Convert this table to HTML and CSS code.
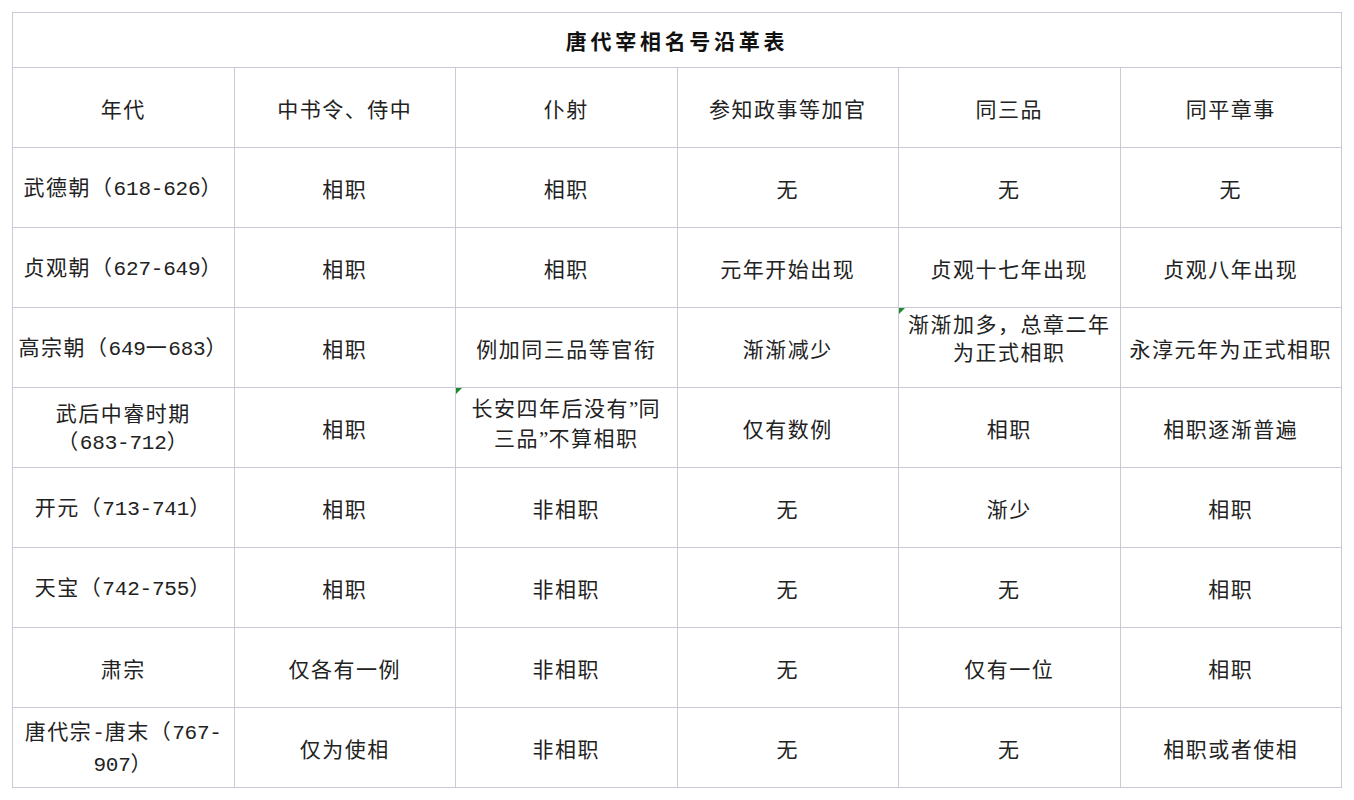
FILE: index.html
```html
<!DOCTYPE html>
<html lang="zh-CN">
<head>
<meta charset="utf-8">
<title>唐代宰相名号沿革表</title>
<link rel="stylesheet" href="styles.css">
</head>
<body>
<table class="tbl">
  <colgroup>
    <col class="c"><col class="c"><col class="c"><col class="c"><col class="c"><col class="c">
  </colgroup>
  <tr><td colspan="6"><div class="cell title"><p>唐代宰相名号沿革表</p></div></td></tr>
  <tr>
    <td><div class="cell"><p>年代</p></div></td><td><div class="cell"><p>中书令、侍中</p></div></td><td><div class="cell"><p>仆射</p></div></td><td><div class="cell"><p>参知政事等加官</p></div></td><td><div class="cell"><p>同三品</p></div></td><td><div class="cell"><p>同平章事</p></div></td>
  </tr>
  <tr>
    <td><div class="cell"><p>武德朝（<span class="n">618-626</span>）</p></div></td><td><div class="cell"><p>相职</p></div></td><td><div class="cell"><p>相职</p></div></td><td><div class="cell"><p>无</p></div></td><td><div class="cell"><p>无</p></div></td><td><div class="cell"><p>无</p></div></td>
  </tr>
  <tr>
    <td><div class="cell"><p>贞观朝（<span class="n">627-649</span>）</p></div></td><td><div class="cell"><p>相职</p></div></td><td><div class="cell"><p>相职</p></div></td><td><div class="cell"><p>元年开始出现</p></div></td><td><div class="cell"><p>贞观十七年出现</p></div></td><td><div class="cell"><p>贞观八年出现</p></div></td>
  </tr>
  <tr>
    <td><div class="cell"><p>高宗朝（<span class="n">649</span>一<span class="n">683</span>）</p></div></td><td><div class="cell"><p>相职</p></div></td><td><div class="cell"><p>例加同三品等官衔</p></div></td><td><div class="cell"><p>渐渐减少</p></div></td><td><div class="cell top note"><p>渐渐加多，总章二年<br>为正式相职</p></div></td><td><div class="cell"><p>永淳元年为正式相职</p></div></td>
  </tr>
  <tr>
    <td><div class="cell"><p>武后中睿时期<br>（<span class="n">683-712</span>）</p></div></td><td><div class="cell"><p>相职</p></div></td><td><div class="cell top t2 note"><p>长安四年后没有<span class="q">”</span>同<br>三品<span class="q">”</span>不算相职</p></div></td><td><div class="cell"><p>仅有数例</p></div></td><td><div class="cell"><p>相职</p></div></td><td><div class="cell"><p>相职逐渐普遍</p></div></td>
  </tr>
  <tr>
    <td><div class="cell"><p>开元（<span class="n">713-741</span>）</p></div></td><td><div class="cell"><p>相职</p></div></td><td><div class="cell"><p>非相职</p></div></td><td><div class="cell"><p>无</p></div></td><td><div class="cell"><p>渐少</p></div></td><td><div class="cell"><p>相职</p></div></td>
  </tr>
  <tr>
    <td><div class="cell"><p>天宝（<span class="n">742-755</span>）</p></div></td><td><div class="cell"><p>相职</p></div></td><td><div class="cell"><p>非相职</p></div></td><td><div class="cell"><p>无</p></div></td><td><div class="cell"><p>无</p></div></td><td><div class="cell"><p>相职</p></div></td>
  </tr>
  <tr>
    <td><div class="cell"><p>肃宗</p></div></td><td><div class="cell"><p>仅各有一例</p></div></td><td><div class="cell"><p>非相职</p></div></td><td><div class="cell"><p>无</p></div></td><td><div class="cell"><p>仅有一位</p></div></td><td><div class="cell"><p>相职</p></div></td>
  </tr>
  <tr>
    <td><div class="cell"><p>唐代宗<span class="n">-</span>唐末（<span class="n">767-</span><br><span class="n">907</span>）</p></div></td><td><div class="cell"><p>仅为使相</p></div></td><td><div class="cell"><p>非相职</p></div></td><td><div class="cell"><p>无</p></div></td><td><div class="cell"><p>无</p></div></td><td><div class="cell"><p>相职或者使相</p></div></td>
  </tr>
</table>
</body>
</html>
```
FILE: styles.css
```css
html, body {
  margin: 0;
  padding: 0;
  background: #ffffff;
}
body {
  padding: 12px 0 0 12px;
}
.tbl {
  border-collapse: collapse;
  table-layout: fixed;
  width: 1330px;
  font-family: "Noto Sans CJK SC", sans-serif;
  font-size: 21px;
  color: #222222;
}
.c {
  width: 221.5px;
}
.tbl td {
  border: 1px solid #c9c9d8;
  padding: 0;
}
.cell {
  position: relative;
  height: 79px;
  display: flex;
  align-items: center;
  justify-content: center;
  overflow: hidden;
}
.cell p {
  margin: 0;
  text-align: center;
  white-space: nowrap;
  line-height: 28px;
  letter-spacing: 1.5px;
}
.cell.title {
  height: 54px;
}
.cell.title p {
  font-weight: bold;
  font-size: 21px;
  letter-spacing: 3.7px;
  color: #111111;
}
.cell.top {
  align-items: flex-start;
  padding-top: 1px;
  box-sizing: border-box;
}
.cell.t2 {
  padding-top: 5px;
}
.n {
  font-family: "Liberation Mono", monospace;
  letter-spacing: -0.2px;
}
.q {
  font-family: "Liberation Serif", serif;
  letter-spacing: 0;
}
.note::before {
  content: "";
  position: absolute;
  left: 0;
  top: 0;
  width: 0;
  height: 0;
  border-top: 6px solid #1c8a2a;
  border-right: 6px solid transparent;
}
```
